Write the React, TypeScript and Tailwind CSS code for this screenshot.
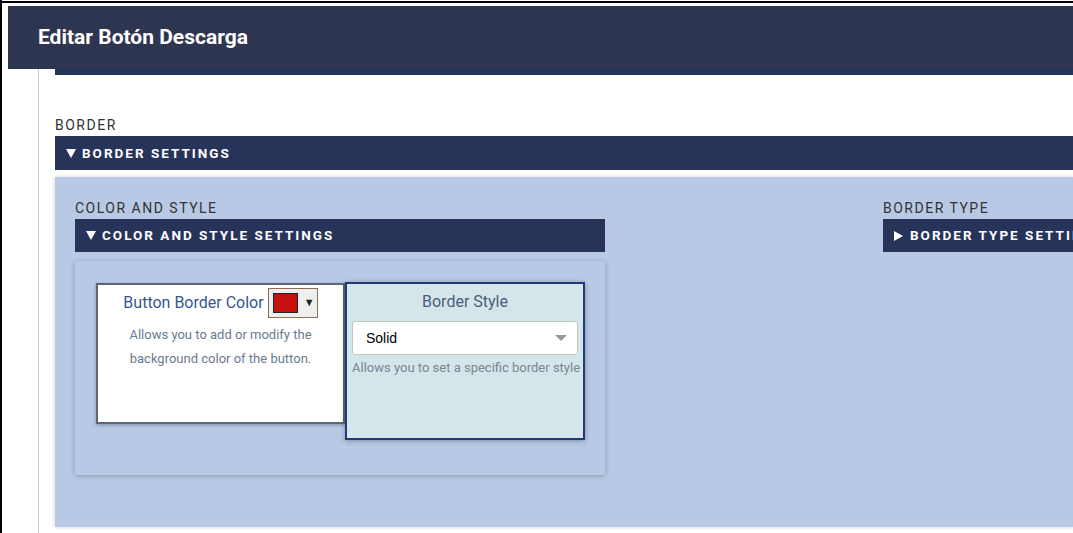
import React from "react";

// Editor panel: "Editar Botón Descarga" with nested border settings sections.

const font = "font-['Roboto','Noto_Sans',sans-serif]";

function Arrow({ open }: { open: boolean }) {
  return open ? (
    <svg width="10" height="9" viewBox="0 0 10 9" className="mr-[6px] shrink-0">
      <path d="M0 0h10L5 9z" fill="white" />
    </svg>
  ) : (
    <svg width="9" height="10" viewBox="0 0 9 10" className="mr-[7px] shrink-0">
      <path d="M0 0v10l9-5z" fill="white" />
    </svg>
  );
}

function SectionBar({ label, open, tall }: { label: string; open: boolean; tall?: boolean }) {
  return (
    <div className={`${tall ? "h-[34px]" : "h-[33px]"} bg-[#28335a] flex items-center pl-[11px] text-white text-[13.5px] font-bold tracking-[2px] whitespace-nowrap overflow-hidden`}>
      <Arrow open={open} />
      {label}
    </div>
  );
}

function Caption({ children }: { children: React.ReactNode }) {
  return <div className="text-[14px] leading-4 tracking-[1.5px] text-[#333] mb-[3px] whitespace-nowrap">{children}</div>;
}

export default function App() {
  return (
    <div className={`h-[533px] overflow-hidden bg-white border-l-2 border-black ${font}`}>
      <div className="h-[2px] bg-black mt-px" />
      <div className="pt-[3px] pl-[6px]">
        <div className="h-[63px] bg-[#2e3550] flex items-center pl-[30px] text-white text-[21px] font-bold">
          Editar Botón Descarga
        </div>
      </div>

      <div className="flex pl-[6px] h-full">
        <div className="w-[30px] shrink-0" />
        <div className="w-px bg-[#cccccc] shrink-0" />
        <div className="flex-1 pl-[16px] min-w-0">
          <div className="h-[6px] bg-[#283358]" />

          <div className="mt-[42px]">
            <Caption>BORDER</Caption>
            <SectionBar label="BORDER SETTINGS" open tall />
          </div>

          <div className="mt-[7px] h-[350px] bg-[#b8c9e6] shadow-[0_0_4px_rgba(0,0,0,0.2)] pt-[23px] pl-[20px] flex overflow-hidden">
            <div className="w-[530px] shrink-0">
              <Caption>COLOR AND STYLE</Caption>
              <SectionBar label="COLOR AND STYLE SETTINGS" open />
              <div className="mt-[9px] h-[214px] bg-[#b8c9e6] shadow-[0_1px_5px_rgba(0,0,0,0.25)] pt-[21px] pl-[21px] flex items-start">
                <div className="w-[249px] h-[141px] bg-white border-2 border-[#5f6670] shadow-[0_1px_3px_rgba(0,0,0,0.3)] mt-px text-center px-2">
                  <div className="flex items-center justify-center gap-[4px] mt-[3px]">
                    <span className="text-[16px] text-[#35578f]">Button Border Color</span>
                    <div className="w-[50px] h-[30px] border border-[#8b6f55] bg-[#efefef] flex items-center pl-[4px] gap-[6px]">
                      <div className="w-[25px] h-[20px] bg-[#c41010] border border-[#222]" />
                      <span className="text-[11px] text-[#222]">▼</span>
                    </div>
                  </div>
                  <p className="mt-[5px] text-[13px] leading-[24px] text-[#6b7a90]">
                    Allows you to add or modify the background color of the button.
                  </p>
                </div>
                <div className="w-[240px] h-[158px] bg-[#d4e6ea] border-2 border-[#1e3a78] shadow-[0_1px_5px_rgba(0,0,0,0.3)] px-[5px]">
                  <div className="text-center text-[16px] text-[#4b5d7b] mt-[6px]">Border Style</div>
                  <div className="mt-[7px] h-[34px] bg-white border border-[#c4c4c4] rounded-[3px] flex items-center justify-between pl-[13px] pr-[10px] font-['Liberation_Sans',Arial,sans-serif] text-[14px] text-black">
                    Solid
                    <span className="w-0 h-0 border-l-[6px] border-r-[6px] border-t-[6px] border-l-transparent border-r-transparent border-t-[#9a9a9a]" />
                  </div>
                  <p className="mt-[5px] text-[13px] leading-4 text-[#7b8594] whitespace-nowrap">
                    Allows you to set a specific border style
                  </p>
                </div>
              </div>
            </div>

            <div className="w-[530px] shrink-0 ml-[278px]">
              <Caption>BORDER TYPE</Caption>
              <SectionBar label="BORDER TYPE SETTINGS" open={false} />
            </div>
          </div>
        </div>
      </div>
    </div>
  );
}
